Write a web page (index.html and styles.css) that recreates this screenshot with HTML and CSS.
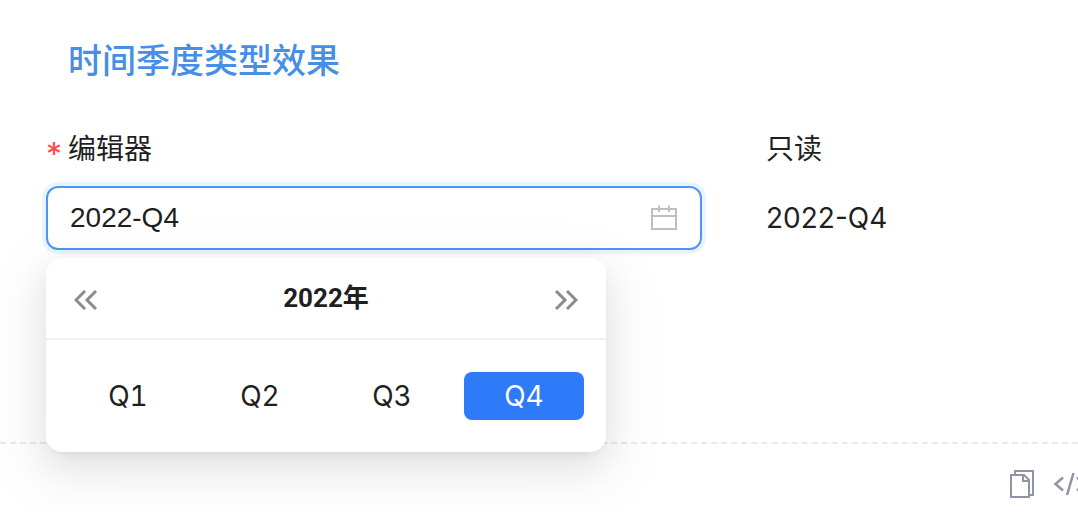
FILE: index.html
```html
<!DOCTYPE html>
<html lang="zh-CN">
<head>
<meta charset="utf-8">
<title>时间季度类型效果</title>
<link rel="stylesheet" href="styles.css">
</head>
<body>
<main class="demo">
  <h1 class="title">时间季度类型效果</h1>
  <form class="form">
    <div class="field">
      <label class="label" for="quarter"><span class="required">*</span>编辑器</label>
      <div class="picker">
        <input class="picker-input" id="quarter" type="text" value="2022-Q4">
        <svg class="calendar" viewBox="0 0 28 28" aria-hidden="true"><path d="M2 5h24v20H2zM2 12h24M9 1.500v6.500M19 1.500v6.500"/></svg>
        <div class="panel">
          <div class="panel-header">
            <button class="nav" type="button" aria-label="上一年"><svg viewBox="0 0 24 20"><path d="M11 1L2 10l9 9M22 1l-9 9 9 9"/></svg></button>
            <button class="year" type="button">2022年</button>
            <button class="nav" type="button" aria-label="下一年"><svg viewBox="0 0 24 20"><path d="M2 1l9 9-9 9M13 1l9 9-9 9"/></svg></button>
          </div>
          <div class="quarters">
            <button class="quarter" type="button">Q1</button>
            <button class="quarter" type="button">Q2</button>
            <button class="quarter" type="button">Q3</button>
            <button class="quarter selected" type="button">Q4</button>
          </div>
        </div>
      </div>
    </div>
    <div class="field">
      <span class="label">只读</span>
      <output class="readonly">2022-Q4</output>
    </div>
  </form>
  <div class="actions">
    <button class="action" type="button" aria-label="复制"><svg class="copy" viewBox="0 0 24 28"><path d="M5 4V1h18v24h-3M1 5h13l5 5v17H1zM13 5v6h6"/></svg></button>
    <button class="action" type="button" aria-label="代码"><svg class="code" viewBox="0 0 36 28"><path stroke-width="2.500" d="M11 7.500L3.500 14l7.500 6.500M21.500 3L15 25M25 7.500l7.500 6.500-7.500 6.500"/></svg></button>
  </div>
</main>
</body>
</html>
```
FILE: styles.css
```css
* {
  box-sizing: border-box;
}

body {
  margin: 0;
  overflow: hidden;
  background: #fff;
  color: #1f1f1f;
  font-family: Inter, "Noto Sans CJK SC", sans-serif;
  font-size: 28px;
}

button {
  padding: 0;
  border: 0;
  background: none;
  color: inherit;
  font: inherit;
  cursor: pointer;
}

svg {
  display: block;
  fill: none;
  stroke: currentColor;
}

.title {
  margin: 0;
  padding: 37px 68px 0;
  color: #478fe6;
  font-size: 34px;
  font-weight: 500;
  line-height: 48px;
}

.form {
  display: grid;
  grid-template-columns: 656fr 266fr;
  column-gap: 64px;
  padding: 42px 46px 192px;
}

.label {
  display: flex;
  margin-bottom: 15px;
  line-height: 44px;
}

.required {
  width: 22px;
  padding-top: 12px;
  color: #ff4d4f;
  font-size: 32px;
  line-height: 32px;
}

.picker {
  position: relative;
  display: flex;
  align-items: center;
  height: 64px;
  padding: 0 22px;
  border: 2px solid #4f95f7;
  border-radius: 12px;
  box-shadow: 0 0 0 4px #eaf4ff;
}

.picker-input {
  flex: 1;
  min-width: 0;
  padding: 0;
  border: 0;
  outline: 0;
  background: none;
  color: inherit;
  font: 28px "Liberation Sans", sans-serif;
}

.calendar {
  width: 28px;
  height: 28px;
  color: #bfbfbf;
  stroke-width: 2;
}

.panel {
  position: absolute;
  top: 70px;
  left: -2px;
  width: 560px;
  border-radius: 16px;
  background: #fff;
  box-shadow: 0 12px 32px rgba(0, 0, 0, 0.08), 0 6px 12px -8px rgba(0, 0, 0, 0.12), 0 18px 56px 16px rgba(0, 0, 0, 0.05);
}

.panel-header {
  display: flex;
  align-items: center;
  justify-content: space-between;
  height: 82px;
  padding: 0 28px;
  border-bottom: 2px solid #f0f0f0;
}

.nav {
  padding-top: 4px;
  color: #8c8c8c;
}

.nav svg {
  width: 24px;
  height: 20px;
  stroke-width: 3;
}

.year {
  padding-bottom: 6px;
  font: 700 26px Roboto, "Noto Sans CJK SC", sans-serif;
}

.quarters {
  display: grid;
  grid-template-columns: repeat(4, 1fr);
  gap: 12px;
  padding: 32px 22px;
}

.quarter {
  height: 48px;
  border-radius: 8px;
  font-variant-numeric: tabular-nums;
}

.selected {
  background: #2f7af8;
  color: #fff;
}

.readonly {
  display: block;
  line-height: 64px;
}

.actions {
  display: flex;
  justify-content: flex-end;
  gap: 18px;
  margin-right: -10px;
  padding: 26px 0 14px;
  border-top: 2px dashed #eaeaee;
  color: #9095a5;
}

.copy {
  width: 24px;
  height: 28px;
  stroke-width: 2;
}

.code {
  width: 36px;
  height: 28px;
}
```
